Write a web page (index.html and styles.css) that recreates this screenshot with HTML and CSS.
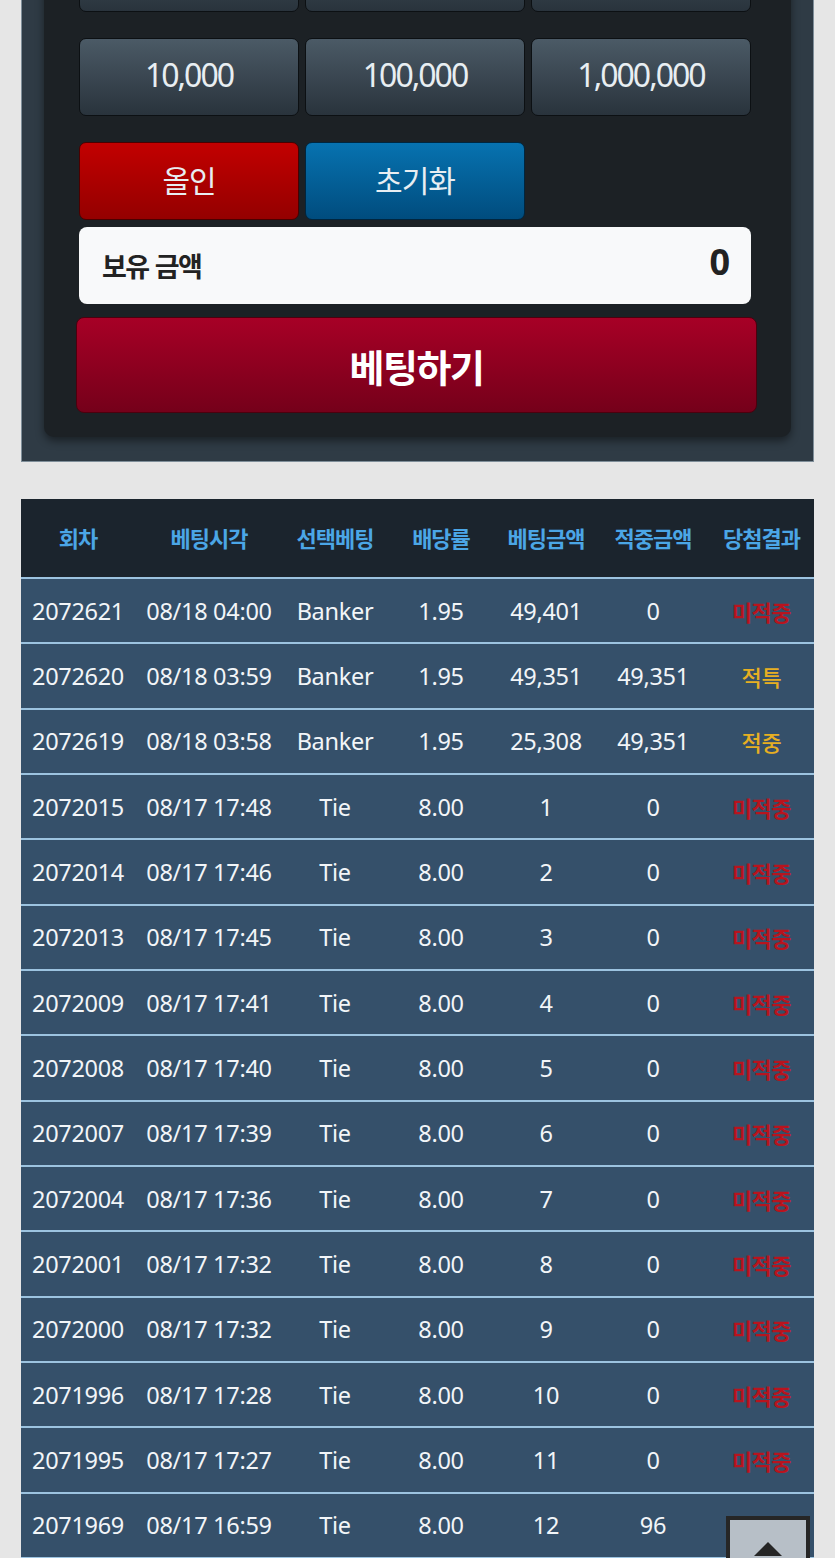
FILE: index.html
```html
<!DOCTYPE html>
<html lang="ko">
<head>
  <meta charset="UTF-8" />
  <meta name="viewport" content="width=device-width, initial-scale=1.0"/>
  <title>베팅</title>
  <link rel="stylesheet" href="styles.css">
</head>
<body>
  <div class="bet-wrap">
    <div class="bet-box">
      <div class="chip-row">
        <button class="chip">1,000</button>
        <button class="chip">5,000</button>
        <button class="chip">50,000</button>
      </div>
      <div class="chip-row">
        <button class="chip">10,000</button>
        <button class="chip">100,000</button>
        <button class="chip">1,000,000</button>
      </div>
      <div class="chip-row">
        <button class="chip chip-red">올인</button>
        <button class="chip chip-blue">초기화</button>
      </div>
      <div class="amount">
        <span class="amount-label">보유 금액</span>
        <span class="amount-value">0</span>
      </div>
      <button class="bet-btn">베팅하기</button>
    </div>
  </div>

  <table class="history">
    <colgroup>
      <col style="width:114px"><col style="width:148px"><col style="width:104px"><col style="width:108px"><col style="width:102px"><col style="width:112px"><col style="width:105px">
    </colgroup>
    <thead>
      <tr><th>회차</th><th>베팅시각</th><th>선택베팅</th><th>배당률</th><th>베팅금액</th><th>적중금액</th><th>당첨결과</th></tr>
    </thead>
    <tbody>
      <tr><td>2072621</td><td>08/18 04:00</td><td>Banker</td><td>1.95</td><td>49,401</td><td>0</td><td class="lose">미적중</td></tr>
      <tr><td>2072620</td><td>08/18 03:59</td><td>Banker</td><td>1.95</td><td>49,351</td><td>49,351</td><td class="win">적특</td></tr>
      <tr><td>2072619</td><td>08/18 03:58</td><td>Banker</td><td>1.95</td><td>25,308</td><td>49,351</td><td class="win">적중</td></tr>
      <tr><td>2072015</td><td>08/17 17:48</td><td>Tie</td><td>8.00</td><td>1</td><td>0</td><td class="lose">미적중</td></tr>
      <tr><td>2072014</td><td>08/17 17:46</td><td>Tie</td><td>8.00</td><td>2</td><td>0</td><td class="lose">미적중</td></tr>
      <tr><td>2072013</td><td>08/17 17:45</td><td>Tie</td><td>8.00</td><td>3</td><td>0</td><td class="lose">미적중</td></tr>
      <tr><td>2072009</td><td>08/17 17:41</td><td>Tie</td><td>8.00</td><td>4</td><td>0</td><td class="lose">미적중</td></tr>
      <tr><td>2072008</td><td>08/17 17:40</td><td>Tie</td><td>8.00</td><td>5</td><td>0</td><td class="lose">미적중</td></tr>
      <tr><td>2072007</td><td>08/17 17:39</td><td>Tie</td><td>8.00</td><td>6</td><td>0</td><td class="lose">미적중</td></tr>
      <tr><td>2072004</td><td>08/17 17:36</td><td>Tie</td><td>8.00</td><td>7</td><td>0</td><td class="lose">미적중</td></tr>
      <tr><td>2072001</td><td>08/17 17:32</td><td>Tie</td><td>8.00</td><td>8</td><td>0</td><td class="lose">미적중</td></tr>
      <tr><td>2072000</td><td>08/17 17:32</td><td>Tie</td><td>8.00</td><td>9</td><td>0</td><td class="lose">미적중</td></tr>
      <tr><td>2071996</td><td>08/17 17:28</td><td>Tie</td><td>8.00</td><td>10</td><td>0</td><td class="lose">미적중</td></tr>
      <tr><td>2071995</td><td>08/17 17:27</td><td>Tie</td><td>8.00</td><td>11</td><td>0</td><td class="lose">미적중</td></tr>
      <tr><td>2071969</td><td>08/17 16:59</td><td>Tie</td><td>8.00</td><td>12</td><td>96</td><td class="win">적중</td></tr>
    </tbody>
  </table>

  <a class="to-top" href="#"><span class="arrow"></span></a>
</body>
</html>
```

FILE: styles.css
```css
body {
  font-family: "Noto Sans", "Noto Sans CJK KR", sans-serif;
  background: #e6e6e6;
  margin: 0;
  padding: 0 0 40px;
  color: #fff;
}
.bet-wrap {
  margin: -106px 21px 0;
  padding: 20px 22px 24px 22px;
  background: #2f3b45;
  border: 1px solid #7f8e99;
  border-top: none;
}
.bet-box {
  background: #1c2125;
  border-radius: 10px;
  padding: 20px 40px 24px 35px;
  box-shadow: 0 4px 8px rgba(0, 0, 0, 0.45);
}
.chip-row {
  display: grid;
  grid-template-columns: repeat(3, 1fr);
  gap: 6px;
  margin-bottom: 26px;
}
.chip-row:nth-child(3) {
  margin-bottom: 7px;
}
.chip {
  height: 78px;
  border: 1px solid #0c1013;
  border-radius: 7px;
  background: linear-gradient(#4b5a66, #29333c);
  color: #e8eef2;
  font-family: "Noto Sans", "Noto Sans CJK KR", sans-serif;
  font-size: 32px;
  letter-spacing: -2px;
  line-height: 1;
  cursor: pointer;
  padding: 0 0 4px;
}
.chip-red {
  background: linear-gradient(#c20000, #940000);
  border-color: #4a0000;
  font-family: "Noto Sans CJK KR", sans-serif;
  font-size: 30px;
  letter-spacing: -1px;
}
.chip-blue {
  background: linear-gradient(#0772b0, #004c7e);
  border-color: #00263f;
  font-family: "Noto Sans CJK KR", sans-serif;
  font-size: 30px;
  letter-spacing: -1px;
}
.amount {
  display: flex;
  align-items: center;
  justify-content: space-between;
  height: 77px;
  box-sizing: border-box;
  padding: 0 21px 0 23px;
  background: #f8f9fa;
  border-radius: 8px;
  color: #222;
}
.amount-label {
  font-family: "Noto Sans CJK KR", sans-serif;
  font-size: 27px;
  font-weight: 700;
  letter-spacing: -1.5px;
}
.amount-value {
  font-size: 36px;
  font-weight: 700;
  margin-top: -8px;
}
.bet-btn {
  display: block;
  width: calc(100% + 9px);
  margin: 13px -6px 0 -3px;
  height: 96px;
  border: 1px solid #4c000e;
  border-radius: 8px;
  background: linear-gradient(#a70026, #75001a);
  color: #fff;
  font-family: "Noto Sans CJK KR", sans-serif;
  font-size: 38px;
  font-weight: 700;
  letter-spacing: -1.5px;
  cursor: pointer;
}
.history {
  width: 793px;
  margin: 37px 21px 0;
  border-collapse: collapse;
  table-layout: fixed;
}
.history th {
  height: 75px;
  padding: 0 0 3px;
  background: #1b242d;
  color: #4ba6e6;
  font-family: "Noto Sans CJK KR", sans-serif;
  font-size: 22px;
  font-weight: 700;
  letter-spacing: -1px;
  border-bottom: 2px solid #9cc3e0;
}
.history td {
  height: 63.33px;
  padding: 0;
  background: #35506a;
  text-align: center;
  font-size: 23.5px;
  color: #f2f5f8;
  border-bottom: 2px solid #9cc3e0;
  white-space: nowrap;
  letter-spacing: -0.3px;
}
.history td.lose {
  color: #b8141e;
  font-family: "Noto Sans CJK KR", sans-serif;
  font-weight: 700;
  font-size: 22px;
  letter-spacing: -0.5px;
}
.history td.win {
  color: #e7af22;
  font-family: "Noto Sans CJK KR", sans-serif;
  font-size: 22px;
  font-weight: 500;
}
.to-top {
  position: fixed;
  right: 25px;
  bottom: -30px;
  width: 76px;
  height: 64px;
  background: #b7bfc7;
  border: 4px solid #262626;
}
.arrow {
  position: absolute;
  left: 50%;
  top: 22px;
  margin-left: -14px;
  border: 14px solid transparent;
  border-bottom-color: #262626;
  border-top: none;
}
```
